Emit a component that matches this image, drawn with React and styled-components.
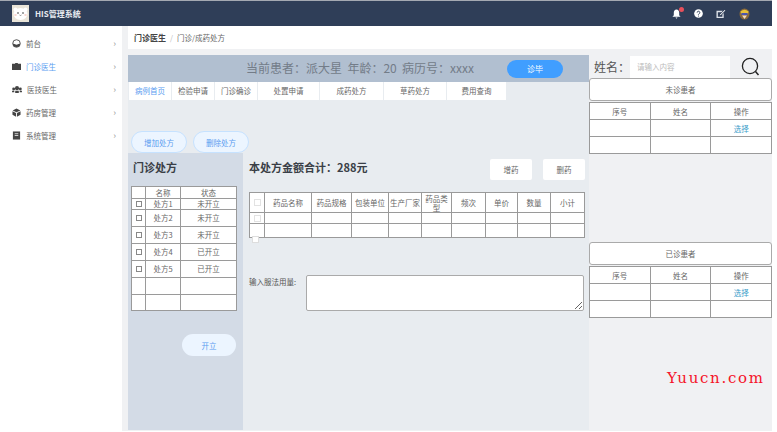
import React from 'react';
import styled, { createGlobalStyle } from 'styled-components';

const GlobalStyle = createGlobalStyle`
  html, body { margin: 0; padding: 0; background: #fff; }
  body { font-family: "Noto Sans CJK SC", "Liberation Sans", sans-serif; color: #555; }
  * { box-sizing: border-box; }
`;

const menuItems = [
  { name: '前台', icon: 'dash' },
  { name: '门诊医生', icon: 'case', active: true },
  { name: '医技医生', icon: 'people' },
  { name: '药房管理', icon: 'box' },
  { name: '系统管理', icon: 'book' },
];
const tabs = [
  { name: '病例首页', w: 42, active: true },
  { name: '检验申请', w: 42 },
  { name: '门诊确诊', w: 42 },
  { name: '处置申请', w: 61 },
  { name: '成药处方', w: 63 },
  { name: '草药处方', w: 62 },
  { name: '费用查询', w: 59 },
];
const recipes = [
  ['处方1', '未开立', 11],
  ['处方2', '未开立', 17],
  ['处方3', '未开立', 17],
  ['处方4', '已开立', 17],
  ['处方5', '已开立', 17],
];
const drugCols = [
  ['', 15], ['药品名称', 47], ['药品规格', 40], ['包装单位', 37], ['生产厂家', 33],
  ['药品类型', 30], ['频次', 34], ['单价', 32], ['数量', 33], ['小计', 34],
];

const MenuIcon = ({ type }) => {
  if (type === 'dash') return (
    <svg width="9" height="9" viewBox="0 0 10 10"><circle cx="5" cy="5" r="4.2" fill="none" stroke="#444" /><path d="M1 5a4 4 0 0 0 8 0L5 6.5z" fill="#444" /></svg>
  );
  if (type === 'case') return (
    <svg width="9" height="9" viewBox="0 0 10 10"><path d="M3.5 2V1h3v1H10v7H0V2z" fill="#444" /></svg>
  );
  if (type === 'people') return (
    <svg width="10" height="9" viewBox="0 0 11 10"><circle cx="5.5" cy="3.5" r="2.3" fill="#444" /><circle cx="1.8" cy="4.5" r="1.6" fill="#444" /><circle cx="9.2" cy="4.5" r="1.6" fill="#444" /><path d="M3.5 9V6.5h4V9zM0 8V6.5h2.5V8zM8.500 8V6.500H11V8z" fill="#444" /></svg>
  );
  if (type === 'box') return (
    <svg width="9" height="9" viewBox="0 0 10 10"><path d="M5 .5l4.300 2.200L5 4.800.7 2.700zM.5 3.600l4 2v4l-4-2.200zM9.500 3.600l-4 2v4l4-2.200z" fill="#444" /></svg>
  );
  return (
    <svg width="9" height="9" viewBox="0 0 10 10"><path d="M1 .5h8v9H1z" fill="#444" /><path d="M3 3h4M3 5h4" stroke="#fff" strokeWidth=".8" /></svg>
  );
};

const Logo = () => (
  <svg width="17" height="17" viewBox="0 0 17 17">
    <rect width="17" height="17" fill="#e9e4d8" />
    <circle cx="3.500" cy="4.500" r="2" fill="#fff" />
    <circle cx="13.500" cy="4.500" r="2" fill="#fff" />
    <ellipse cx="8.500" cy="9" rx="7" ry="6" fill="#fff" />
    <circle cx="6" cy="8" r=".8" fill="#333" />
    <circle cx="11" cy="8" r=".8" fill="#333" />
    <ellipse cx="3.500" cy="10" rx="1.400" ry=".8" fill="#f5c6bd" />
    <ellipse cx="13.500" cy="10" rx="1.400" ry=".8" fill="#f5c6bd" />
    <path d="M7.500 10q1 1 2 0" fill="none" stroke="#333" strokeWidth=".5" />
  </svg>
);

const PatientTable = ({ title }) => (
  <PatientBlock>
    <PatientTitle>{title}</PatientTitle>
    <PatientGrid>
      <tbody>
        <tr><td>序号</td><td>姓名</td><td>操作</td></tr>
        <tr><td /><td /><td><SelectLink>选择</SelectLink></td></tr>
        <tr><td /><td /><td /></tr>
      </tbody>
    </PatientGrid>
  </PatientBlock>
);

export default function App() {
  return (
    <Page>
      <GlobalStyle />
      <TopBar>
        <Brand>
          <Logo />
          <BrandName>HIS管理系统</BrandName>
        </Brand>
        <TopIcons>
          <BellWrap>
            <svg width="9" height="10" viewBox="0 0 10 11"><path d="M5 .5c2 0 3 1.500 3 3.500v3l1.500 1.500h-9L2 7V4c0-2 1-3.500 3-3.500zM3.800 9.300h2.400L5 10.800z" fill="#fff" /></svg>
            <BellDot />
          </BellWrap>
          <svg width="9" height="9" viewBox="0 0 10 10"><circle cx="5" cy="5" r="4.800" fill="#fff" /><path d="M3.500 4a1.500 1.500 0 1 1 2.200 1.300L5 6v.6" fill="none" stroke="#2f3e58" strokeWidth="1" /><circle cx="5" cy="7.800" r=".6" fill="#2f3e58" /></svg>
          <svg width="10" height="9" viewBox="0 0 10 10"><path d="M0 2h7L5.500 3.500H1.500v5h5V6L8 4.500V10H0z" fill="#dfe3ea" /><path d="M4 6l5-5 .8.800-5 5L3.700 7z" fill="#fff" /></svg>
          <svg width="11" height="12" viewBox="0 0 11 12"><ellipse cx="5.500" cy="6" rx="5" ry="5.500" fill="#8a6a3a" /><path d="M1.500 3.500Q5.500 0 9.500 3.500L9 5.500H2z" fill="#e8c23a" /><rect x="2.500" y="5" width="6" height="2" fill="#4a55b0" /><path d="M3 7.500h5L5.500 11z" fill="#f1d9c0" /></svg>
        </TopIcons>
      </TopBar>
      <Body>
        <Sidebar>
          {menuItems.map((m) => (
            <MenuItem key={m.name} $active={m.active}>
              <MenuIcon type={m.icon} />
              <MenuName>{m.name}</MenuName>
              <Chevron>›</Chevron>
            </MenuItem>
          ))}
        </Sidebar>
        <Main>
          <Breadcrumb>
            <strong>门诊医生</strong>
            <CrumbSep>/</CrumbSep>
            <span>门诊/成药处方</span>
          </Breadcrumb>
          <Workspace>
            <CenterPane>
              <PatientBar>
                <PatientInfo>当前患者：派大星&nbsp;&nbsp;年龄：20&nbsp;&nbsp;病历号：xxxx</PatientInfo>
                <FinishButton>诊毕</FinishButton>
              </PatientBar>
              <TabRow>
                {tabs.map((t) => (
                  <Tab key={t.name} $w={t.w} $active={t.active}>{t.name}</Tab>
                ))}
              </TabRow>
              <ActionRow>
                <RoundButton>增加处方</RoundButton>
                <RoundButton>删除处方</RoundButton>
              </ActionRow>
              <Columns>
                <RecipePanel>
                  <PanelTitle>门诊处方</PanelTitle>
                  <RecipeTable>
                    <colgroup><col width="14" /><col width="35" /><col width="56" /></colgroup>
                    <tbody>
                      <RecipeRow $h={12}><td /><td>名称</td><td>状态</td></RecipeRow>
                      {recipes.map(([name, state, h]) => (
                        <RecipeRow key={name} $h={h}>
                          <td><CheckBox /></td>
                          <td>{name}</td>
                          <td>{state}</td>
                        </RecipeRow>
                      ))}
                      <RecipeRow $h={17}><td /><td /><td /></RecipeRow>
                      <RecipeRow $h={16}><td /><td /><td /></RecipeRow>
                    </tbody>
                  </RecipeTable>
                  <OpenRow>
                    <OpenButton>开立</OpenButton>
                  </OpenRow>
                </RecipePanel>
                <DrugPanel>
                  <DrugHead>
                    <PanelTitle>本处方金额合计：288元</PanelTitle>
                    <DrugButtons>
                      <WhiteButton>增药</WhiteButton>
                      <WhiteButton>删药</WhiteButton>
                    </DrugButtons>
                  </DrugHead>
                  <DrugTableWrap>
                    <DrugTable>
                      <colgroup>
                        {drugCols.map(([name, w], i) => <col key={i} width={w} />)}
                      </colgroup>
                      <tbody>
                        <DrugRow $h={20}>
                          {drugCols.map(([name], i) => (
                            <td key={i}>{i === 0 ? <FaintBox /> : name}</td>
                          ))}
                        </DrugRow>
                        <DrugRow $h={11}>
                          {drugCols.map(([name], i) => <td key={i}>{i === 0 && <FaintBox />}</td>)}
                        </DrugRow>
                        <DrugRow $h={14}>
                          {drugCols.map(([name], i) => <td key={i} />)}
                        </DrugRow>
                      </tbody>
                    </DrugTable>
                    <StrayBox />
                  </DrugTableWrap>
                  <UsageRow>
                    <UsageLabel>输入服法用量:</UsageLabel>
                    <UsageInput />
                  </UsageRow>
                </DrugPanel>
              </Columns>
            </CenterPane>
            <RightPane>
              <SearchRow>
                <SearchLabel>姓名：</SearchLabel>
                <SearchInput placeholder="请输入内容" />
                <SearchIcon width="19" height="20" viewBox="0 0 19 20">
                  <circle cx="9" cy="9" r="7.600" fill="none" stroke="#222" strokeWidth="1.300" />
                  <path d="M14.500 14.500l3 3.500" stroke="#222" strokeWidth="1.500" />
                </SearchIcon>
              </SearchRow>
              <PatientTable title="未诊患者" />
              <BlockGap />
              <PatientTable title="已诊患者" />
            </RightPane>
          </Workspace>
        </Main>
      </Body>
      <Watermark>Yuucn.com</Watermark>
    </Page>
  );
}

const Page = styled.div`
  position: relative;
  width: 772px;
  height: 431px;
  overflow: hidden;
  background: #fff;
`;
const TopBar = styled.header`
  height: 26px;
  background: #2f3e58;
  border-top: 1px solid #a4a9b2;
  display: flex;
  align-items: center;
  justify-content: space-between;
  padding: 0 22px 0 12px;
`;
const Brand = styled.div`
  display: flex;
  align-items: center;
  gap: 6px;
`;
const BrandName = styled.span`
  color: #e8ebf0;
  font-size: 8px;
  font-weight: 700;
`;
const TopIcons = styled.div`
  display: flex;
  align-items: center;
  gap: 13px;
  svg { display: block; }
`;
const BellWrap = styled.div`
  position: relative;
`;
const BellDot = styled.i`
  position: absolute;
  top: -2px;
  right: -3px;
  width: 5px;
  height: 5px;
  border-radius: 50%;
  background: #e8505b;
`;
const Body = styled.div`
  display: flex;
  height: 405px;
`;
const Sidebar = styled.nav`
  width: 122px;
  flex: none;
  background: #fff;
  padding-top: 6px;
`;
const MenuItem = styled.div`
  height: 23px;
  display: flex;
  align-items: center;
  padding: 0 6px 0 12px;
  font-size: 7.500px;
  color: ${(p) => (p.$active ? '#5a9cf0' : '#666')};
`;
const MenuName = styled.span`
  margin-left: 5px;
  flex: 1;
`;
const Chevron = styled.span`
  color: #999;
  font-size: 9px;
  line-height: 1;
`;
const Main = styled.main`
  flex: 1;
  background: #f0f1f3;
  padding-left: 6px;
`;
const Breadcrumb = styled.div`
  height: 23px;
  background: #fff;
  margin-bottom: 6px;
  display: flex;
  align-items: center;
  padding-left: 6px;
  font-size: 7.500px;
  color: #666;
  strong { font-size: 8px; color: #444; }
`;
const CrumbSep = styled.span`
  margin: 0 4px;
  color: #bbb;
`;
const Workspace = styled.div`
  display: flex;
  height: 376px;
`;
const CenterPane = styled.section`
  width: 461px;
  flex: none;
  background: #e8ecf0;
  margin-bottom: 1px;
  display: flex;
  flex-direction: column;
`;
const PatientBar = styled.div`
  height: 27px;
  flex: none;
  background: #b1bfd0;
  display: flex;
  align-items: center;
  padding-left: 118px;
`;
const PatientInfo = styled.div`
  width: 261px;
  margin-top: -2px;
  font-size: 12px;
  color: #737c88;
  white-space: nowrap;
`;
const FinishButton = styled.button`
  width: 56px;
  height: 18px;
  padding: 0;
  border: 0;
  border-radius: 9px;
  background: #409eff;
  color: #fff;
  font: inherit;
  font-size: 8px;
`;
const TabRow = styled.div`
  height: 18px;
  flex: none;
  display: flex;
  gap: 1px;
  padding-left: 1px;
`;
const Tab = styled.div`
  width: ${(p) => p.$w}px;
  background: #fff;
  font-size: 7.500px;
  line-height: 18px;
  text-align: center;
  color: ${(p) => (p.$active ? '#5a9cf0' : '#666')};
`;
const ActionRow = styled.div`
  height: 53px;
  flex: none;
  display: flex;
  align-items: flex-end;
  gap: 6px;
  padding-left: 3px;
  position: relative;
  z-index: 1;
`;
const RoundButton = styled.button`
  width: 56px;
  height: 22px;
  padding: 0;
  border: 1px solid #c6e2ff;
  border-radius: 11px;
  background: #ecf5ff;
  color: #5a9cf0;
  font: inherit;
  font-size: 7.500px;
`;
const Columns = styled.div`
  flex: 1;
  display: flex;
`;
const RecipePanel = styled.div`
  width: 115px;
  flex: none;
  background: #d3dbe6;
  padding: 6px 6px 0 3px;
`;
const PanelTitle = styled.h3`
  margin: 0 0 0 2px;
  font-size: 11px;
  line-height: 16px;
  font-weight: 700;
  color: #3a3f47;
  white-space: nowrap;
`;
const RecipeTable = styled.table`
  width: 105px;
  margin-top: 11px;
  table-layout: fixed;
  border-collapse: collapse;
  background: #fff;
  td {
    padding: 0;
    border: 1px solid #9a9a9a;
    font-size: 7.500px;
    line-height: 8px;
    text-align: center;
    color: #666;
  }
`;
const RecipeRow = styled.tr`
  height: ${(p) => p.$h}px;
`;
const CheckBox = styled.i`
  display: block;
  width: 6px;
  height: 6px;
  margin: 0 auto;
  border: 1px solid #888;
`;
const OpenRow = styled.div`
  display: flex;
  justify-content: flex-end;
  margin-top: 23px;
  padding-right: 1px;
`;
const OpenButton = styled.button`
  width: 54px;
  height: 22px;
  padding: 0;
  border: 0;
  border-radius: 11px;
  background: #ecf5ff;
  color: #5a9cf0;
  font: inherit;
  font-size: 7.500px;
`;
const DrugPanel = styled.div`
  flex: 1;
  padding: 6px 5px 0 6px;
`;
const DrugHead = styled.div`
  height: 33px;
  display: flex;
  align-items: flex-start;
  justify-content: space-between;
  h3 { margin: 0; }
`;
const DrugButtons = styled.div`
  display: flex;
  gap: 11px;
`;
const WhiteButton = styled.button`
  width: 42px;
  height: 21px;
  padding: 0;
  border: 0;
  border-radius: 2px;
  background: #fff;
  color: #666;
  font: inherit;
  font-size: 7.500px;
`;
const DrugTableWrap = styled.div`
  position: relative;
`;
const DrugTable = styled.table`
  width: 335px;
  table-layout: fixed;
  border-collapse: collapse;
  background: #fff;
  td {
    padding: 0;
    border: 1px solid #9a9a9a;
    font-size: 7.500px;
    line-height: 9px;
    text-align: center;
    color: #666;
  }
`;
const DrugRow = styled.tr`
  height: ${(p) => p.$h}px;
`;
const FaintBox = styled.i`
  display: block;
  width: 7px;
  height: 7px;
  margin: 0 auto;
  border: 1px solid #e2e2e2;
`;
const StrayBox = styled.i`
  position: absolute;
  left: 3px;
  bottom: -5px;
  width: 7px;
  height: 7px;
  border: 1px solid #ddd;
  background: #fff;
`;
const UsageRow = styled.div`
  display: flex;
  align-items: flex-start;
  gap: 6px;
  margin-top: 37px;
`;
const UsageLabel = styled.label`
  width: 51px;
  flex: none;
  margin-top: 1px;
  font-size: 7.500px;
  line-height: 11px;
  white-space: nowrap;
  color: #555;
`;
const UsageInput = styled.textarea`
  width: 278px;
  height: 36px;
  padding: 0;
  border: 1px solid #aaa;
  border-radius: 2px;
  background: #fff;
  outline: none;
`;
const RightPane = styled.aside`
  width: 183px;
  flex: none;
`;
const SearchRow = styled.div`
  height: 23px;
  display: flex;
  align-items: center;
`;
const SearchLabel = styled.span`
  width: 41px;
  padding-left: 5px;
  font-size: 12px;
  color: #555;
  white-space: nowrap;
`;
const SearchInput = styled.input`
  width: 100px;
  height: 22px;
  padding: 0 7px;
  border: 0;
  background: #fff;
  font: inherit;
  font-size: 7.500px;
  &::placeholder { color: #bbb; }
`;
const SearchIcon = styled.svg`
  margin-left: 11px;
`;
const PatientBlock = styled.div`
  width: 183px;
`;
const PatientTitle = styled.div`
  height: 23px;
  margin-bottom: 1px;
  background: #fff;
  border: 1px solid #aaa;
  border-radius: 3px;
  font-size: 7.500px;
  line-height: 21px;
  text-align: center;
  color: #666;
`;
const PatientGrid = styled.table`
  width: 183px;
  table-layout: fixed;
  border-collapse: collapse;
  background: #fff;
  td {
    height: 17px;
    padding: 0;
    border: 1px solid #9a9a9a;
    font-size: 7.500px;
    text-align: center;
    color: #666;
  }
`;
const SelectLink = styled.span`
  color: #409eca;
`;
const BlockGap = styled.div`
  height: 88px;
`;
const Watermark = styled.div`
  position: absolute;
  left: 667px;
  top: 368px;
  color: #f5142a;
  font-family: "DejaVu Serif", "Liberation Serif", serif;
  font-size: 15px;
  line-height: 20px;
  letter-spacing: 1.700px;
  white-space: nowrap;
`;
